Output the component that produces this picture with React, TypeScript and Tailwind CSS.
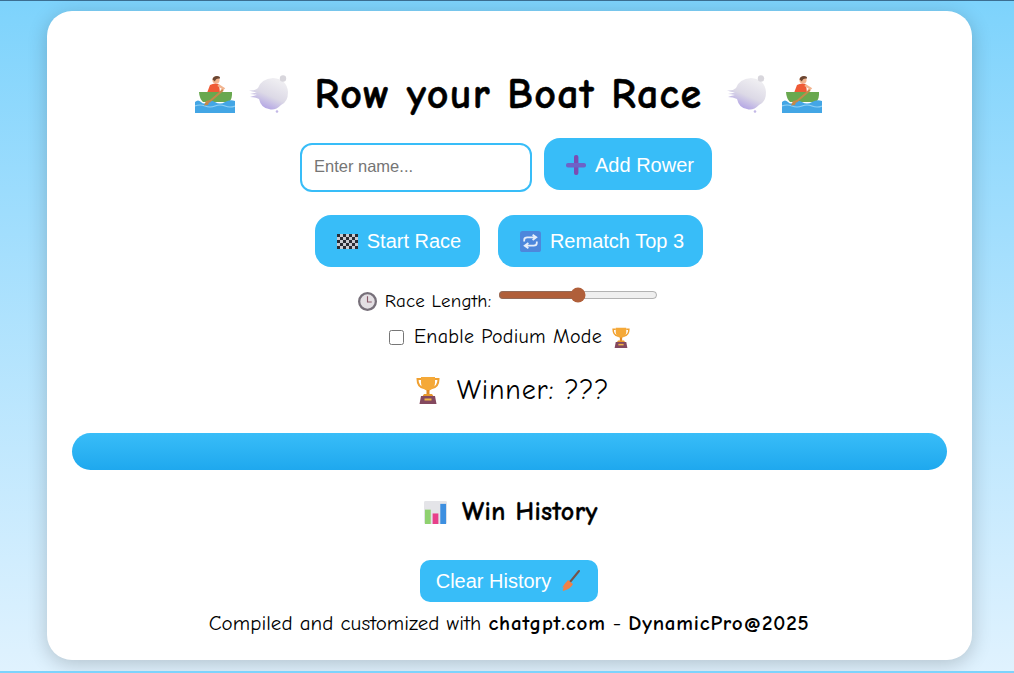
const btn =
  "inline-flex items-center justify-center bg-[#38bdf8] text-[20px] leading-[23px] text-white font-['Liberation_Sans',sans-serif]";

function Rower({ className }: { className: string }) {
  return (
    <svg viewBox="0 0 40 38" className={className}>
      <circle cx="21" cy="5" r="3.6" fill="#f2b48f" />
      <path d="M17.5 4.5 Q18 1 22 1 Q25.5 1.4 25 3.5 Q20.5 3 20 6.5 Z" fill="#6b4632" />
      <path d="M12 18 L15 10 Q19 7.5 24 9 L25 18 Z" fill="#ef5a35" />
      <path d="M23 10 L28.5 13.5 L26 16" fill="none" stroke="#f2b48f" strokeWidth="2.2" />
      <path d="M4 17 H37 Q37.5 24 34 27 H8 Q4.5 24 4 17 Z" fill="#69a84f" />
      <path d="M0 27 Q3 24 6 27 T12 27 T20 27 T30 27 T40 26 V38 H0 Z" fill="#43a6e5" />
      <path d="M0 31 Q5 29 10 31 T20 31 T30 31 T40 31" fill="none" stroke="#8fd0f5" strokeWidth="1.2" />
      <path d="M28 15 L14 27" stroke="#c4894a" strokeWidth="2" />
      <path d="M15 25 L11 26 L9 30.5 L13 30 Z" fill="#c4894a" />
    </svg>
  );
}

function Wind({ className, id }: { className: string; id: string }) {
  return (
    <svg viewBox="0 0 40 38" className={className}>
      <defs>
        <linearGradient id={id} x1="0.75" y1="0.1" x2="0.25" y2="1">
          <stop offset="0" stopColor="#eeedf1" />
          <stop offset="0.5" stopColor="#dcd9e6" />
          <stop offset="1" stopColor="#a897e4" />
        </linearGradient>
      </defs>
      <path
        d="M0 15.5 Q6 16 9 13 Q12 4 24 3 Q38 4 39 17 Q39 27 32 30 Q26 36 20 34 Q12 33 10 24 Q6 22 1 22 Q5 20.5 8 20 Q4 19 1 19 Q5 18 8 17.5 Q4 17 0 15.5 Z"
        fill={`url(#${id})`}
      />
      <circle cx="34" cy="3.5" r="3.2" fill="#d8d6dc" />
      <circle cx="28" cy="36.5" r="1.3" fill="#c3b8e6" />
    </svg>
  );
}

function Trophy({ className }: { className: string }) {
  return (
    <svg viewBox="0 0 24 28" className={className}>
      <path d="M5 3 H1.5 Q1.5 11 8 12 M19 3 H22.5 Q22.5 11 16 12" fill="none" stroke="#f0a030" strokeWidth="2" />
      <path d="M5 1 H19 V7 Q19 13 12 15 Q5 13 5 7 Z" fill="#f5a938" />
      <rect x="10.5" y="14" width="3" height="5" fill="#e08a24" />
      <path d="M8 18 H16 L18 21 H6 Z" fill="#e8982c" />
      <path d="M5 20 H19 L20.5 28 H3.5 Z" fill="#84495f" />
      <rect x="8.5" y="22.5" width="7" height="2" fill="#f2b548" />
    </svg>
  );
}

function Plus({ className }: { className: string }) {
  return (
    <svg viewBox="0 0 20 20" className={className}>
      <rect x="8" y="0" width="4.4" height="20" rx="2" fill="#7b4bb3" />
      <rect x="0" y="8" width="20" height="4.4" rx="2" fill="#6d62c7" />
    </svg>
  );
}

function Checkered({ className }: { className: string }) {
  const cells = [];
  for (let y = 0; y < 5; y++) {
    for (let x = 0; x < 7; x++) {
      if ((x + y) % 2 === 0) cells.push(<rect key={`${x}-${y}`} x={x * 3} y={y * 3} width="3" height="3" fill="#2b2b33" />);
    }
  }
  return (
    <svg viewBox="0 0 21 15" className={className}>
      <rect width="21" height="15" fill="#c9c9d0" />
      {cells}
    </svg>
  );
}

function Repeat({ className }: { className: string }) {
  return (
    <svg viewBox="0 0 20 20" className={className}>
      <rect width="20" height="20" rx="2.5" fill="#4d87dc" />
      <path d="M4 10 V8.5 Q4 6 7 6 H14 M12 3.5 L15.5 6 L12 8.5 M16 10 V11.5 Q16 14 13 14 H6 M8 11.5 L4.5 14 L8 16.5" fill="none" stroke="#e6eefa" strokeWidth="1.7" />
    </svg>
  );
}

function Clock({ className }: { className: string }) {
  return (
    <svg viewBox="0 0 20 20" className={className}>
      <circle cx="10" cy="10" r="8.8" fill="#e3dfe3" stroke="#77707a" strokeWidth="2.4" />
      <path d="M10 4.5 V10.5 H14.5" fill="none" stroke="#8a5a6a" strokeWidth="1.2" />
    </svg>
  );
}

function Chart({ className }: { className: string }) {
  return (
    <svg viewBox="0 0 24 24" className={className}>
      <rect width="24" height="24" rx="1.5" fill="#e4e4e8" />
      <rect x="1" y="9" width="6" height="15" fill="#8fd16f" />
      <rect x="9" y="13" width="6" height="11" fill="#e8408a" />
      <rect x="17" y="3" width="6" height="21" fill="#3d8fe0" />
    </svg>
  );
}

function Broom({ className }: { className: string }) {
  return (
    <svg viewBox="0 0 20 22" className={className}>
      <path d="M18 1 L9 12" stroke="#74544a" strokeWidth="2" strokeLinecap="round" />
      <path d="M7 10 L12 14 Q10 19 2 21 Q1.5 20 3 17 L1 18 Q4 13 7 10 Z" fill="#ef8148" />
    </svg>
  );
}

export default function App() {
  return (
    <div className="flex h-[673px] flex-col overflow-hidden bg-gradient-to-b from-[#7dd3fc] to-[#e0f2fe] font-['Comic_Sans_MS','Comic_Neue','Lato',sans-serif] text-black">
      <div className="h-px bg-[#3c6f92]" />
      <div className="ml-[47px] mt-[10px] flex h-[649px] w-[925px] flex-col items-center rounded-[25px] bg-white px-[25px] shadow-[0_4px_20px_rgba(0,0,0,0.2)]">
        <h1 className="mr-[2px] mt-[55px] flex h-[56px] items-center text-[42px] font-bold tracking-[1.3px] [-webkit-text-stroke:0.5px_black]">
          <Rower className="h-[38px] w-[40px]" />
          <Wind id="puff-a" className="ml-[14px] h-[38px] w-[40px]" />
          <span className="ml-[25px] mr-[24px]">Row your Boat Race</span>
          <Wind id="puff-b" className="h-[38px] w-[40px]" />
          <Rower className="ml-[15px] h-[38px] w-[40px]" />
        </h1>

        <div className="mr-[7px] mt-[16px] flex items-start">
          <input
            placeholder="Enter name..."
            className="mt-[5px] h-[49px] w-[232px] rounded-[12px] border-2 border-[#38bdf8] px-[12px] pb-[2px] font-['Liberation_Sans',sans-serif] text-[16.5px] outline-none placeholder:text-[#757575]"
          />
          <button className={`${btn} ml-[12px] h-[52px] w-[168px] gap-[9px] rounded-[16px] pl-[4px] pt-[2px]`}>
            <Plus className="h-[20px] w-[20px]" />
            Add Rower
          </button>
        </div>

        <div className="mr-[2px] mt-[23px] flex gap-[18px]">
          <button className={`${btn} h-[52px] w-[165px] gap-[9px] rounded-[16px] pl-[4px]`}>
            <Checkered className="h-[15px] w-[21px]" />
            Start Race
          </button>
          <button className={`${btn} h-[52px] w-[205px] gap-[9px] rounded-[16px] pl-[4px]`}>
            <Repeat className="h-[21px] w-[21px]" />
            Rematch Top 3
          </button>
        </div>

        <div className="mr-[3px] mt-[20px] flex h-[28px] items-center text-[19px] tracking-[0.2px]">
          <Clock className="h-[19px] w-[19px]" />
          <span className="ml-[8px]">Race Length:</span>
          <input type="range" defaultValue={50} className="mb-[12px] ml-[7px] w-[160px] accent-[#b05f3a]" />
        </div>

        <label className="mt-[8px] flex h-[28px] items-center text-[20px] tracking-[0.3px]">
          <input type="checkbox" className="h-[15px] w-[15px]" />
          <span className="ml-[10px]">Enable Podium Mode</span>
          <Trophy className="ml-[10px] h-[21px] w-[18px]" />
        </label>

        <div className="ml-[6px] mt-[22px] flex h-[34px] items-center text-[28px] tracking-[0.85px]">
          <Trophy className="h-[28px] w-[24px]" />
          <span className="ml-[17px]">Winner: ???</span>
        </div>

        <div className="mt-[26px] h-[37px] w-full rounded-[20px] bg-gradient-to-b from-[#38bdf8] to-[#1ea8ee]" />

        <h2 className="ml-[3px] mt-[28px] flex h-[28px] items-center text-[26px] font-bold tracking-[0.4px] [-webkit-text-stroke:0.3px_black]">
          <Chart className="h-[23px] w-[23px]" />
          <span className="ml-[15px]">Win History</span>
        </h2>

        <button className={`${btn} mr-[2px] mt-[34px] h-[42px] w-[178px] gap-[10px] rounded-[10px]`}>
          Clear History
          <Broom className="h-[22px] w-[20px]" />
        </button>

        <p className="mr-[1px] mt-[7px] text-[21px] leading-[28px] tracking-[0.05px]">
          Compiled and customized with{" "}
          <b className="tracking-[0.8px]">chatgpt.com</b> - <b className="tracking-[0.8px]">DynamicPro@2025</b>
        </p>
      </div>
      <div className="flex-1" />
      <div className="h-[2px] bg-[#7dd3fc]" />
    </div>
  );
}
